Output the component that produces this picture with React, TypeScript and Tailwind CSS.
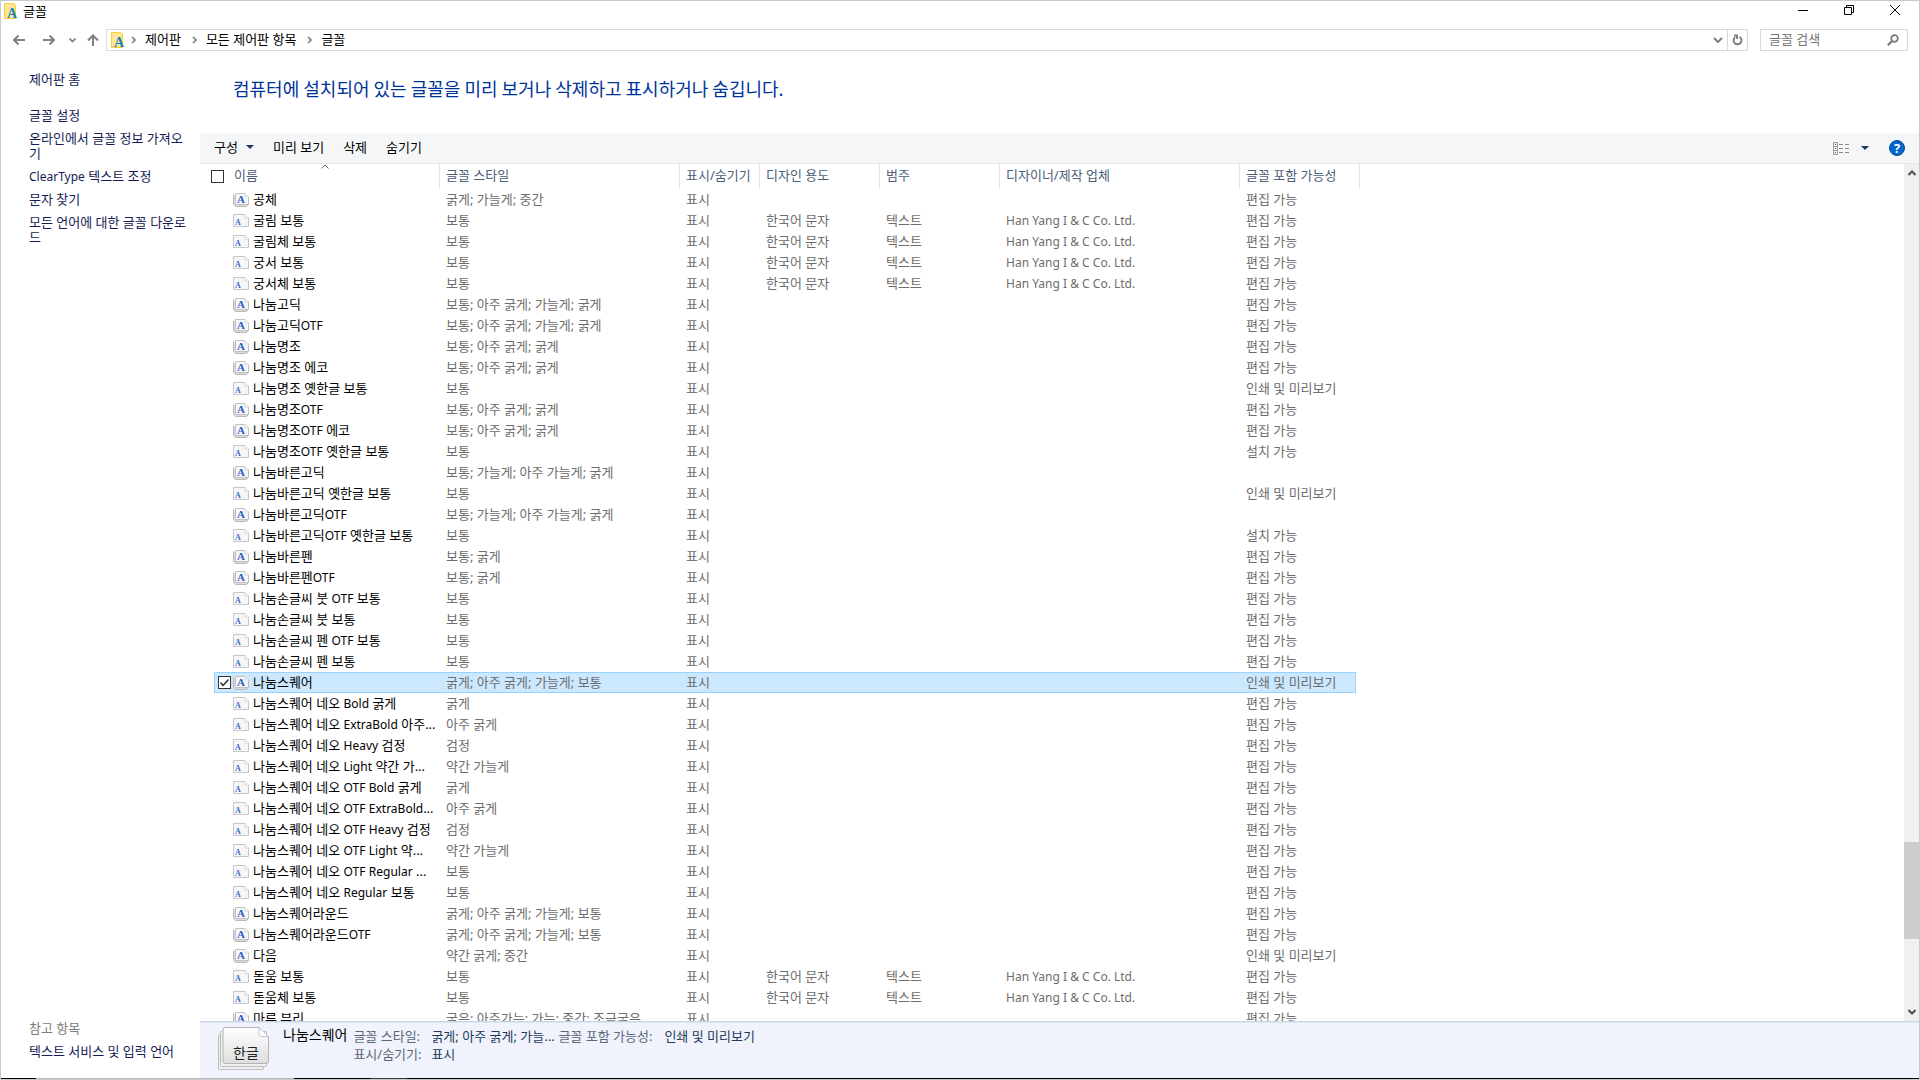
import type { ReactNode } from "react";

type Font = {
  name: string;
  style: string;
  family?: boolean;
  korean?: boolean;
  embed?: string;
  selected?: boolean;
};

const EDIT = "편집 가능";
const PRINT = "인쇄 및 미리보기";
const INSTALL = "설치 가능";

const fonts: Font[] = [
  { name: "공체", style: "굵게; 가늘게; 중간", family: true, embed: EDIT },
  { name: "굴림 보통", style: "보통", korean: true, embed: EDIT },
  { name: "굴림체 보통", style: "보통", korean: true, embed: EDIT },
  { name: "궁서 보통", style: "보통", korean: true, embed: EDIT },
  { name: "궁서체 보통", style: "보통", korean: true, embed: EDIT },
  { name: "나눔고딕", style: "보통; 아주 굵게; 가늘게; 굵게", family: true, embed: EDIT },
  { name: "나눔고딕OTF", style: "보통; 아주 굵게; 가늘게; 굵게", family: true, embed: EDIT },
  { name: "나눔명조", style: "보통; 아주 굵게; 굵게", family: true, embed: EDIT },
  { name: "나눔명조 에코", style: "보통; 아주 굵게; 굵게", family: true, embed: EDIT },
  { name: "나눔명조 옛한글 보통", style: "보통", embed: PRINT },
  { name: "나눔명조OTF", style: "보통; 아주 굵게; 굵게", family: true, embed: EDIT },
  { name: "나눔명조OTF 에코", style: "보통; 아주 굵게; 굵게", family: true, embed: EDIT },
  { name: "나눔명조OTF 옛한글 보통", style: "보통", embed: INSTALL },
  { name: "나눔바른고딕", style: "보통; 가늘게; 아주 가늘게; 굵게", family: true },
  { name: "나눔바른고딕 옛한글 보통", style: "보통", embed: PRINT },
  { name: "나눔바른고딕OTF", style: "보통; 가늘게; 아주 가늘게; 굵게", family: true },
  { name: "나눔바른고딕OTF 옛한글 보통", style: "보통", embed: INSTALL },
  { name: "나눔바른펜", style: "보통; 굵게", family: true, embed: EDIT },
  { name: "나눔바른펜OTF", style: "보통; 굵게", family: true, embed: EDIT },
  { name: "나눔손글씨 붓 OTF 보통", style: "보통", embed: EDIT },
  { name: "나눔손글씨 붓 보통", style: "보통", embed: EDIT },
  { name: "나눔손글씨 펜 OTF 보통", style: "보통", embed: EDIT },
  { name: "나눔손글씨 펜 보통", style: "보통", embed: EDIT },
  { name: "나눔스퀘어", style: "굵게; 아주 굵게; 가늘게; 보통", family: true, embed: PRINT, selected: true },
  { name: "나눔스퀘어 네오 Bold 굵게", style: "굵게", embed: EDIT },
  { name: "나눔스퀘어 네오 ExtraBold 아주...", style: "아주 굵게", embed: EDIT },
  { name: "나눔스퀘어 네오 Heavy 검정", style: "검정", embed: EDIT },
  { name: "나눔스퀘어 네오 Light 약간 가...", style: "약간 가늘게", embed: EDIT },
  { name: "나눔스퀘어 네오 OTF Bold 굵게", style: "굵게", embed: EDIT },
  { name: "나눔스퀘어 네오 OTF ExtraBold...", style: "아주 굵게", embed: EDIT },
  { name: "나눔스퀘어 네오 OTF Heavy 검정", style: "검정", embed: EDIT },
  { name: "나눔스퀘어 네오 OTF Light 약...", style: "약간 가늘게", embed: EDIT },
  { name: "나눔스퀘어 네오 OTF Regular ...", style: "보통", embed: EDIT },
  { name: "나눔스퀘어 네오 Regular 보통", style: "보통", embed: EDIT },
  { name: "나눔스퀘어라운드", style: "굵게; 아주 굵게; 가늘게; 보통", family: true, embed: EDIT },
  { name: "나눔스퀘어라운드OTF", style: "굵게; 아주 굵게; 가늘게; 보통", family: true, embed: EDIT },
  { name: "다음", style: "약간 굵게; 중간", family: true, embed: PRINT },
  { name: "돋움 보통", style: "보통", korean: true, embed: EDIT },
  { name: "돋움체 보통", style: "보통", korean: true, embed: EDIT },
  { name: "마루 부리", style: "굵은; 아주가는; 가는; 중간; 조금굵은", family: true, embed: EDIT },
];

/** Sets Latin runs one size below the surrounding Hangul. */
function Mixed({ text }: { text: string }) {
  return (
    <>
      {text.split(/([A-Za-z]+)/).map((part, i) =>
        i % 2 ? (
          <span key={i} className="text-[12px]">
            {part}
          </span>
        ) : (
          part
        ),
      )}
    </>
  );
}

function FontsFolderIcon() {
  return (
    <svg width="16" height="16" viewBox="0 0 16 16" aria-hidden="true" className="shrink-0 overflow-visible">
      <path d="M1.5 .5H11L12.500 2V15.500H1.500z" fill="#ffe596" stroke="#f6cf3f" />
      <text x="4" y="15" fontSize="14" fontWeight="700" fontFamily="Liberation Serif, serif" fill="#1583bf">
        A
      </text>
    </svg>
  );
}

function FileIcon({ family }: { family?: boolean }) {
  return family ? (
    <svg width="16" height="14" viewBox="0 0 16 14" aria-hidden="true" className="shrink-0 overflow-visible">
      <path d="M.5 1.5V11.500L2.500 13.500H13.500L15.500 11.500" fill="#dcdcdc" stroke="#b9b9b9" />
      <path d="M2.5.5H12L15.5 4V11.5H2.5z" fill="#f6f7f9" stroke="#c0c0c0" />
      <path d="M12 .5V4h3.5" fill="#fff" stroke="#d4d4d4" />
      <text x="4" y="10" fontSize="11" fontWeight="700" fontFamily="Liberation Serif, serif" fill="#2f5bc4">
        A
      </text>
    </svg>
  ) : (
    <svg width="16" height="14" viewBox="0 0 16 14" aria-hidden="true" className="shrink-0 overflow-visible">
      <path d="M.5 .5H12L15.5 4V12.5H.5z" fill="#f6f6f7" stroke="#c6c6c6" />
      <path d="M12 .5V4h3.5" fill="#fff" stroke="#d4d4d4" />
      <text x="2" y="11" fontSize="8" fontWeight="700" fontFamily="Liberation Serif, serif" fill="#4168cb">
        A
      </text>
    </svg>
  );
}

function Stroke({ w, h, d, sw = 1, color = "#808080" }: { w: number; h: number; d: string; sw?: number; color?: string }) {
  return (
    <svg width={w} height={h} viewBox={`0 0 ${w} ${h}`} fill="none" stroke={color} strokeWidth={sw} aria-hidden="true" className="shrink-0">
      <path d={d} />
    </svg>
  );
}

function Crumb({ children }: { children: ReactNode }) {
  return (
    <>
      <Stroke w={5} h={8} d="M1 1L4 4L1 7" sw={1.7} />
      <button className="ml-[9px] mr-[11px] pb-0.5">{children}</button>
    </>
  );
}

function CheckBox({ label, checked, hidden }: { label: string; checked?: boolean; hidden?: boolean }) {
  return (
    <span className={hidden ? "relative flex size-[13px] shrink-0 opacity-0" : "relative flex size-[13px] shrink-0"}>
      <input
        type="checkbox"
        aria-label={label}
        defaultChecked={checked}
        className="peer size-[13px] appearance-none border border-[#333] bg-white"
      />
      <svg viewBox="0 0 13 13" fill="none" stroke="#222" strokeWidth="1.300" className="pointer-events-none absolute inset-0 hidden peer-checked:block" aria-hidden="true">
        <path d="M2.5 6.5L5 9.5L10.5 3.5" />
      </svg>
    </span>
  );
}

function Th({ children }: { children: ReactNode }) {
  return <th className="h-[25px] border-r border-[#e5e5e5] p-0 pb-0.5 pl-1.5 text-left font-normal">{children}</th>;
}

function Td({ children, selected, first, last, small }: { children?: ReactNode; selected?: boolean; first?: boolean; last?: boolean; small?: boolean }) {
  return (
    <td
      className={[
        "border-y p-0 leading-[19px]",
        selected ? "border-[#99d1ff] bg-[#cce8ff]" : "border-transparent",
        first ? "border-l pl-[3px] text-black" : "pl-1.5",
        last ? "border-r" : "",
        small ? "text-[12px]" : "",
      ].join(" ")}
    >
      {children}
    </td>
  );
}

function Caret() {
  return (
    <svg width="8" height="4" viewBox="0 0 8 4" aria-hidden="true">
      <path d="M0 0H8L4 4z" fill="#1e395b" />
    </svg>
  );
}

function StackIcon() {
  return (
    <svg width="52" height="44" viewBox="0 0 52 44" aria-hidden="true" className="shrink-0 overflow-visible">
      <defs>
        <linearGradient id="sheet" x1="0" y1="0" x2="0" y2="1">
          <stop offset="0" stopColor="#fff" />
          <stop offset="1" stopColor="#dedede" />
        </linearGradient>
      </defs>
      <rect x=".5" y="7.5" width="45" height="35" rx="1" fill="#f0f0f0" stroke="#bdbdbd" />
      <rect x="2.500" y="4.500" width="46" height="35" rx="1" fill="#f0f0f0" stroke="#bdbdbd" />
      <path d="M7 .5H41L50.500 9.500V34Q50.500 36.500 48 36.500H7Q5 36.500 5 34V3Q5 .5 7 .5z" fill="url(#sheet)" stroke="#b4b4b4" />
      <path d="M41 .5V7Q41 9.500 43.500 9.500H50.500z" fill="#fff" stroke="#c4c4c4" />
      <text x="28" y="31" fontSize="14" textAnchor="middle" fontFamily="Noto Sans CJK KR, sans-serif" fill="#222">
        한글
      </text>
    </svg>
  );
}

export default function App() {
  return (
    <div className="flex h-screen flex-col overflow-hidden border border-b-0 border-[#cacaca] bg-white font-['Noto_Sans','Noto_Sans_CJK_KR',sans-serif] text-[13px] leading-[15px] text-black">
      <header className="flex h-5 shrink-0 items-center pl-0.5 pr-px">
        <FontsFolderIcon />
        <h1 className="ml-1 flex-1">글꼴</h1>
        <button aria-label="최소화" className="flex h-[18px] w-[46px] items-center justify-center self-start">
          <Stroke w={10} h={10} d="M0 5.500H10" color="#000" />
        </button>
        <button aria-label="이전 크기로 복원" className="flex h-[18px] w-[46px] items-center justify-center self-start">
          <Stroke w={10} h={10} d="M.5 2.500H7.500V9.500H.5zM2.500 2.500V.5H9.500V7.500H7.500" color="#000" />
        </button>
        <button aria-label="닫기" className="flex h-[18px] w-[46px] items-center justify-center self-start">
          <Stroke w={10} h={10} d="M0 0L10 10M10 0L0 10" color="#000" />
        </button>
      </header>

      <nav aria-label="탐색" className="mt-2 flex h-[22px] shrink-0 items-center pl-3 pr-[11px]">
        <button aria-label="뒤로"><Stroke w={12} h={10} d="M12 5H1M5.500 .5L1 5L5.500 9.500" sw={2} /></button>
        <button aria-label="앞으로" className="ml-[18px]"><Stroke w={12} h={10} d="M0 5H11M6.500 .5L11 5L6.500 9.500" sw={2} /></button>
        <button aria-label="최근 위치" className="ml-3.5"><Stroke w={7} h={5} d="M.5 .5L3.500 3.500L6.500 .5" sw={1.7} /></button>
        <button aria-label="위로" className="ml-[11px]"><Stroke w={12} h={12} d="M6 12V1.500M1 6.500L6 1.500L11 6.500" sw={2} /></button>
        <div className="ml-[7px] flex h-[22px] flex-1 items-center border border-[#d9d9d9] pl-[3px]">
          <FontsFolderIcon />
          <div className="ml-[5px] flex flex-1 items-center">
            <Crumb>제어판</Crumb>
            <Crumb>모든 제어판 항목</Crumb>
            <Crumb>글꼴</Crumb>
          </div>
          <button aria-label="이전 위치" className="flex w-[19px] justify-center"><Stroke w={10} h={6} d="M1 1L5 5L9 1" sw={2} /></button>
          <button aria-label="새로 고침" className="flex h-full w-5 items-center justify-center border-l border-[#d9d9d9]">
            <Stroke w={11} h={12} d="M7.500 2.800A4 4 0 1 1 3 3.200M2 1.500H5V5" sw={2} />
          </button>
        </div>
        <label className="ml-3 flex h-[22px] w-[148px] items-center border border-[#d9d9d9] px-2">
          <input aria-label="글꼴 검색" placeholder="글꼴 검색" className="w-full min-w-0 bg-transparent pb-0.5 outline-none placeholder:text-[#757575]" />
          <svg width="12" height="12" viewBox="0 0 12 12" fill="none" stroke="#757575" className="shrink-0" aria-hidden="true">
            <circle cx="7.500" cy="4.500" r="3.300" strokeWidth="1.700" />
            <path d="M5 7L.8 11.200" strokeWidth="2" />
          </svg>
        </label>
      </nav>

      <div className="flex min-h-0 flex-1">
        <aside className="flex w-[199px] shrink-0 flex-col justify-between pb-[19px] pl-7 pr-2.5 pt-[21px] text-[#151c55]">
          <div className="flex flex-col items-start gap-2">
            <a href="#home" className="mb-[13px]">제어판 홈</a>
            <a href="#settings">글꼴 설정</a>
            <a href="#online">온라인에서 글꼴 정보 가져오기</a>
            <a href="#cleartype"><Mixed text="ClearType 텍스트 조정" /></a>
            <a href="#charmap">문자 찾기</a>
            <a href="#download">모든 언어에 대한 글꼴 다운로드</a>
          </div>
          <div className="flex flex-col items-start gap-2">
            <h2 className="text-[#7b7b7b]">참고 항목</h2>
            <a href="#text-services">텍스트 서비스 및 입력 언어</a>
          </div>
        </aside>

        <main className="flex min-w-0 flex-1 flex-col">
          <h2 className="flex h-[82px] shrink-0 items-center pb-2 pl-[33px] font-['Noto_Sans_CJK_KR',sans-serif] text-[18px] leading-6 text-[#003399]">
            컴퓨터에 설치되어 있는 글꼴을 미리 보거나 삭제하고 표시하거나 숨깁니다.
          </h2>

          <div role="toolbar" className="flex h-[31px] shrink-0 items-center border-b border-[#e5e6e8] bg-[#f5f6f8] px-3.5">
            <button className="flex items-center gap-2 pb-0.5">구성 <Caret /></button>
            <button className="ml-[19px] pb-0.5">미리 보기</button>
            <button className="ml-[19px] pb-0.5">삭제</button>
            <button className="ml-[19px] pb-0.5">숨기기</button>
            <button aria-label="보기 변경" className="ml-auto">
              <svg width="16" height="13" viewBox="0 0 16 13" fill="none" aria-hidden="true">
                <path d="M.5 .5H4.500V12.500H.5zM.5 4.500H4.500M.5 8.500H4.500" stroke="#9a9a9a" />
                <path d="M2 2.500H3M2 6.500H3M2 10.500H3" stroke="#555" />
                <path d="M6 2.500H10M12 2.500H16M6 6.500H10M12 6.500H16M6 10.500H10M12 10.500H16" stroke="#8a8a8a" />
              </svg>
            </button>
            <button aria-label="추가 옵션" className="ml-3"><Caret /></button>
            <button aria-label="도움말" className="ml-5 flex size-4 items-center justify-center rounded-full border border-[#0a4c94] bg-[#0067ce] text-[13px] font-bold leading-none text-white">
              ?
            </button>
          </div>

          <div className="flex min-h-0 flex-1">
            <div className="min-w-0 flex-1 overflow-hidden">
              <table className="w-[1160px] table-fixed border-separate border-spacing-0 whitespace-nowrap text-[#6d6d6d]">
                <colgroup>
                  <col className="w-3.5" />
                  <col className="w-[226px]" />
                  <col className="w-[240px]" />
                  <col className="w-[80px]" />
                  <col className="w-[120px]" />
                  <col className="w-[120px]" />
                  <col className="w-[240px]" />
                  <col className="w-[116px]" />
                  <col className="w-1" />
                </colgroup>
                <thead className="text-[#4c607a]">
                  <tr>
                    <th colSpan={2} className="relative h-[25px] border-r border-[#e5e5e5] p-0 text-left font-normal">
                      <div className="flex items-center gap-2.5 pl-[11px]">
                        <CheckBox label="모두 선택" />
                        <span className="pb-0.5">이름</span>
                      </div>
                      <svg width="8" height="5" viewBox="0 0 8 5" fill="none" stroke="#666" className="absolute left-[121px] top-0" aria-hidden="true">
                        <path d="M.5 4.500L4 1L7.500 4.500" />
                      </svg>
                    </th>
                    <Th>글꼴 스타일</Th>
                    <Th>표시/숨기기</Th>
                    <Th>디자인 용도</Th>
                    <Th>범주</Th>
                    <Th>디자이너/제작 업체</Th>
                    <th colSpan={2} className="h-[25px] border-r border-[#e5e5e5] p-0 pb-0.5 pl-1.5 text-left font-normal">글꼴 포함 가능성</th>
                  </tr>
                </thead>
                <tbody>
                  {fonts.map((f) => (
                    <tr key={f.name}>
                      <td className="p-0" />
                      <Td selected={f.selected} first>
                        <div className="flex h-[19px] items-center">
                          <CheckBox label={f.name} checked={f.selected} hidden={!f.selected} />
                          <span className="ml-0.5 flex"><FileIcon family={f.family} /></span>
                          <span className="ml-1"><Mixed text={f.name} /></span>
                        </div>
                      </Td>
                      <Td selected={f.selected}>{f.style}</Td>
                      <Td selected={f.selected}>표시</Td>
                      <Td selected={f.selected}>{f.korean && "한국어 문자"}</Td>
                      <Td selected={f.selected}>{f.korean && "텍스트"}</Td>
                      <Td selected={f.selected} small>{f.korean && "Han Yang I & C Co. Ltd."}</Td>
                      <Td selected={f.selected} last>{f.embed}</Td>
                      <td className="p-0" />
                    </tr>
                  ))}
                </tbody>
              </table>
            </div>
            <div className="flex w-[15px] shrink-0 flex-col items-center justify-between bg-[#f0f0f0] py-1.5">
              <button aria-label="위로 스크롤"><Stroke w={8} h={6} d="M.5 5L4 1.500L7.500 5" sw={2} color="#505050" /></button>
              <div className="flex w-full flex-1 flex-col">
                <div className="grow-[668]" />
                <div className="h-[97px] bg-[#cdcdcd]" />
                <div className="grow-[70]" />
              </div>
              <button aria-label="아래로 스크롤"><Stroke w={8} h={6} d="M.5 1L4 4.500L7.500 1" sw={2} color="#505050" /></button>
            </div>
          </div>

          <section aria-label="세부 정보" className="flex h-[57px] shrink-0 border-t border-[#c9d5e8] bg-[#f0f3fb] pl-[18px] pt-[5px] shadow-[inset_0_1px_0_#dde6f2]">
            <StackIcon />
            <h3 className="ml-[13px] text-[14px] leading-4">나눔스퀘어</h3>
            <dl className="ml-1.5 grid h-9 grid-cols-[78px_127px_106px_auto] whitespace-nowrap leading-[18px] text-[#1e395b]">
              <dt className="text-[#5a6779]">글꼴 스타일:</dt>
              <dd>굵게; 아주 굵게; 가늘...</dd>
              <dt className="text-[#5a6779]">글꼴 포함 가능성:</dt>
              <dd>인쇄 및 미리보기</dd>
              <dt className="text-[#5a6779]">표시/숨기기:</dt>
              <dd>표시</dd>
            </dl>
          </section>
        </main>
      </div>

      <div className="flex h-0.5 shrink-0 border-b border-[#cacaca] bg-black">
        <div className="w-[35px]" />
        <div className="w-[258px] bg-[#bdbdbd]" />
        <div className="w-[77px]" />
        <div className="w-9 bg-[#3a3a3a]" />
      </div>
    </div>
  );
}
